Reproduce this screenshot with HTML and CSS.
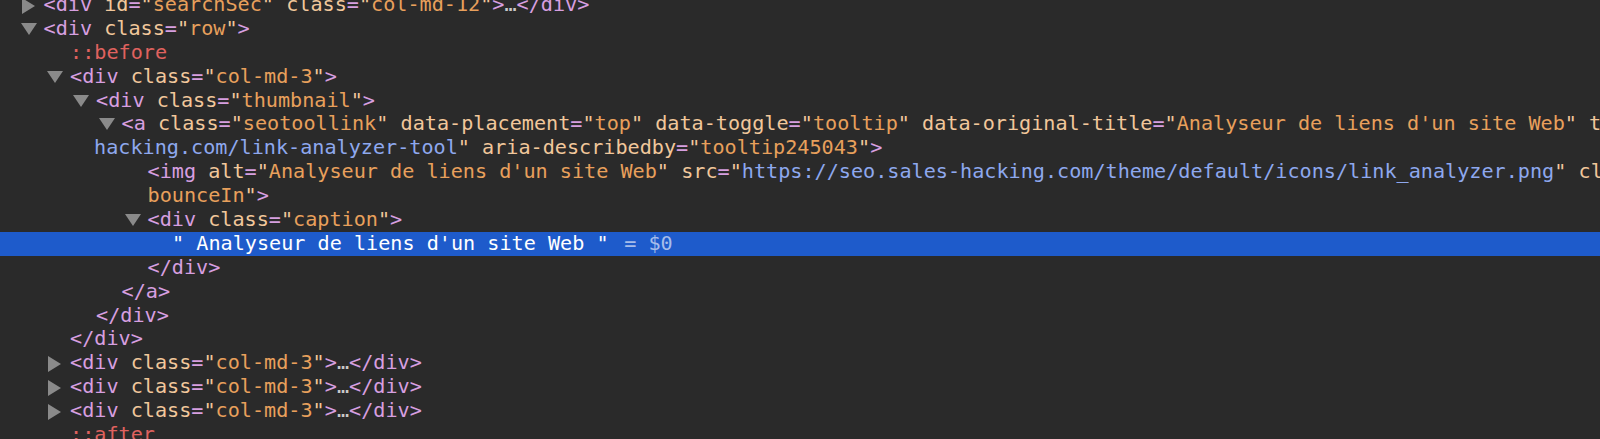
FILE: index.html
```html
<!DOCTYPE html>
<html lang="fr">
<head>
<meta charset="utf-8">
<title>Elements</title>
<link rel="stylesheet" href="styles.css">
</head>
<body>
<div class="tree">
  <div class="line l0"><span class="arrow closed"></span><span class="code"><span class="t">&lt;div</span> <span class="an">id</span><span class="t">=</span><span class="an">"</span><span class="av">searchSec</span><span class="an">"</span> <span class="an">class</span><span class="t">=</span><span class="an">"</span><span class="av">col-md-12</span><span class="an">"</span><span class="t">&gt;</span><span class="el">…</span><span class="t">&lt;/div&gt;</span></span></div>
  <div class="line l0"><span class="arrow open"></span><span class="code"><span class="t">&lt;div</span> <span class="an">class</span><span class="t">=</span><span class="an">"</span><span class="av">row</span><span class="an">"</span><span class="t">&gt;</span></span></div>
  <div class="line l1"><span class="arrow"></span><span class="code"><span class="ps">::before</span></span></div>
  <div class="line l1"><span class="arrow open"></span><span class="code"><span class="t">&lt;div</span> <span class="an">class</span><span class="t">=</span><span class="an">"</span><span class="av">col-md-3</span><span class="an">"</span><span class="t">&gt;</span></span></div>
  <div class="line l2"><span class="arrow open"></span><span class="code"><span class="t">&lt;div</span> <span class="an">class</span><span class="t">=</span><span class="an">"</span><span class="av">thumbnail</span><span class="an">"</span><span class="t">&gt;</span></span></div>
  <div class="line l3"><span class="arrow open"></span><span class="code"><span class="t">&lt;a</span> <span class="an">class</span><span class="t">=</span><span class="an">"</span><span class="av">seotoollink</span><span class="an">"</span> <span class="an">data-placement</span><span class="t">=</span><span class="an">"</span><span class="av">top</span><span class="an">"</span> <span class="an">data-toggle</span><span class="t">=</span><span class="an">"</span><span class="av">tooltip</span><span class="an">"</span> <span class="an">data-original-title</span><span class="t">=</span><span class="an">"</span><span class="av">Analyseur de liens d'un site Web</span><span class="an">"</span> <span class="an">title</span><span class="t">=</span><span class="an">""</span> <span class="an">href</span><span class="t">=</span><span class="an">"</span><span class="lk">https://seo.sales-</span></span></div>
  <div class="line c3"><span class="arrow"></span><span class="code"><span class="lk">hacking.com/link-analyzer-tool</span><span class="an">"</span> <span class="an">aria-describedby</span><span class="t">=</span><span class="an">"</span><span class="av">tooltip245043</span><span class="an">"</span><span class="t">&gt;</span></span></div>
  <div class="line l4"><span class="arrow"></span><span class="code"><span class="t">&lt;img</span> <span class="an">alt</span><span class="t">=</span><span class="an">"</span><span class="av">Analyseur de liens d'un site Web</span><span class="an">"</span> <span class="an">src</span><span class="t">=</span><span class="an">"</span><span class="lk">https://seo.sales-hacking.com/theme/default/icons/link_analyzer.png</span><span class="an">"</span> <span class="an">class</span><span class="t">=</span><span class="an">"</span><span class="av">animated </span></span></div>
  <div class="line l4"><span class="arrow"></span><span class="code"><span class="av">bounceIn</span><span class="an">"</span><span class="t">&gt;</span></span></div>
  <div class="line l4"><span class="arrow open"></span><span class="code"><span class="t">&lt;div</span> <span class="an">class</span><span class="t">=</span><span class="an">"</span><span class="av">caption</span><span class="an">"</span><span class="t">&gt;</span></span></div>
  <div class="line l5 selected"><span class="arrow"></span><span class="code"><span class="txt">" Analyseur de liens d'un site Web "</span><span class="ref"> = $0</span></span></div>
  <div class="line l4"><span class="arrow"></span><span class="code"><span class="t">&lt;/div&gt;</span></span></div>
  <div class="line l3"><span class="arrow"></span><span class="code"><span class="t">&lt;/a&gt;</span></span></div>
  <div class="line l2"><span class="arrow"></span><span class="code"><span class="t">&lt;/div&gt;</span></span></div>
  <div class="line l1"><span class="arrow"></span><span class="code"><span class="t">&lt;/div&gt;</span></span></div>
  <div class="line l1"><span class="arrow closed"></span><span class="code"><span class="t">&lt;div</span> <span class="an">class</span><span class="t">=</span><span class="an">"</span><span class="av">col-md-3</span><span class="an">"</span><span class="t">&gt;</span><span class="el">…</span><span class="t">&lt;/div&gt;</span></span></div>
  <div class="line l1"><span class="arrow closed"></span><span class="code"><span class="t">&lt;div</span> <span class="an">class</span><span class="t">=</span><span class="an">"</span><span class="av">col-md-3</span><span class="an">"</span><span class="t">&gt;</span><span class="el">…</span><span class="t">&lt;/div&gt;</span></span></div>
  <div class="line l1"><span class="arrow closed"></span><span class="code"><span class="t">&lt;div</span> <span class="an">class</span><span class="t">=</span><span class="an">"</span><span class="av">col-md-3</span><span class="an">"</span><span class="t">&gt;</span><span class="el">…</span><span class="t">&lt;/div&gt;</span></span></div>
  <div class="line l1"><span class="arrow"></span><span class="code"><span class="ps">::after</span></span></div>
</div>
</body>
</html>
```

FILE: styles.css
```css
html, body {
  margin: 0;
  padding: 0;
  overflow: hidden;
  background: #2a2a2a;
}

body {
  width: 1600px;
  height: 439px;
  font-family: "DejaVu Sans Mono", "Liberation Mono", monospace;
  font-size: 20.15px;
  color: #d6d6d6;
}

.tree {
  margin-top: -7px;
  display: flex;
  flex-direction: column;
}

.line {
  display: flex;
  align-items: center;
  height: 23.9px;
  white-space: pre;
  overflow: hidden;
}

.l0 { padding-left: 19.5px; }
.l1 { padding-left: 46px; }
.l2 { padding-left: 72px; }
.l3 { padding-left: 97.5px; }
.l4 { padding-left: 123.5px; }
.l5 { padding-left: 148px; }
.c3 { padding-left: 70px; }

.arrow {
  flex: 0 0 24px;
  width: 24px;
  height: 16px;
  position: relative;
}

.arrow.open::before {
  content: "";
  position: absolute;
  left: 1px;
  top: 2px;
  border-left: 8px solid transparent;
  border-right: 8px solid transparent;
  border-top: 12.5px solid #8a8a8a;
}

.arrow.closed::before {
  content: "";
  position: absolute;
  left: 2px;
  top: 1px;
  border-top: 8px solid transparent;
  border-bottom: 8px solid transparent;
  border-left: 13px solid #8a8a8a;
}

.code {
  line-height: 23.9px;
}

.t  { color: #d79fe0; }
.an { color: #f1c79b; }
.av { color: #e8a05c; }
.lk { color: #8ea8ee; }
.ps { color: #e0625f; }
.el { color: #c9c9c9; }

.selected {
  background: #1e5bcb;
}

.selected .txt { color: #ffffff; }
.selected .ref {
  color: #a6bdea;
  margin-left: 3.5px;
}
```
